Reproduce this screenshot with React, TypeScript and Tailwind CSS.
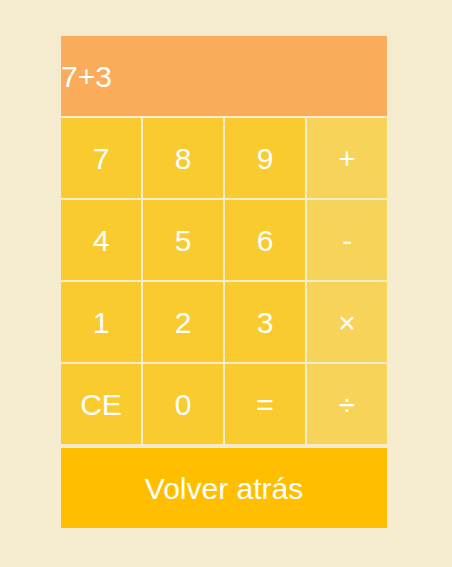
import React from 'react';

const keys: { label: string; op?: boolean }[] = [
  { label: '7' }, { label: '8' }, { label: '9' }, { label: '+', op: true },
  { label: '4' }, { label: '5' }, { label: '6' }, { label: '-', op: true },
  { label: '1' }, { label: '2' }, { label: '3' }, { label: '×', op: true },
  { label: 'CE' }, { label: '0' }, { label: '=' }, { label: '÷', op: true },
];

export default function App() {
  return (
    <main className="min-h-[567px] bg-[#f5ebcf] pt-[36px] pl-[61px] font-['Liberation_Sans',Arial,sans-serif] text-white">
      <div className="w-[326px] flex flex-col">
        {/* Display */}
        <div className="h-[80px] bg-[#fbac5a] flex items-center text-[30px]">7+3</div>

        {/* Keypad */}
        <div className="mt-[2px] grid grid-cols-4 gap-[2px]">
          {keys.map((k) => (
            <button
              key={k.label}
              className={`h-[80px] flex items-center justify-center text-[30px] ${k.op ? 'bg-[#f7d359]' : 'bg-[#facb2f]'}`}
            >
              {k.label}
            </button>
          ))}
        </div>

        <button className="mt-[4px] h-[80px] bg-[#ffbf00] flex items-center justify-center text-[30px]">
          Volver atrás
        </button>
      </div>
    </main>
  );
}
